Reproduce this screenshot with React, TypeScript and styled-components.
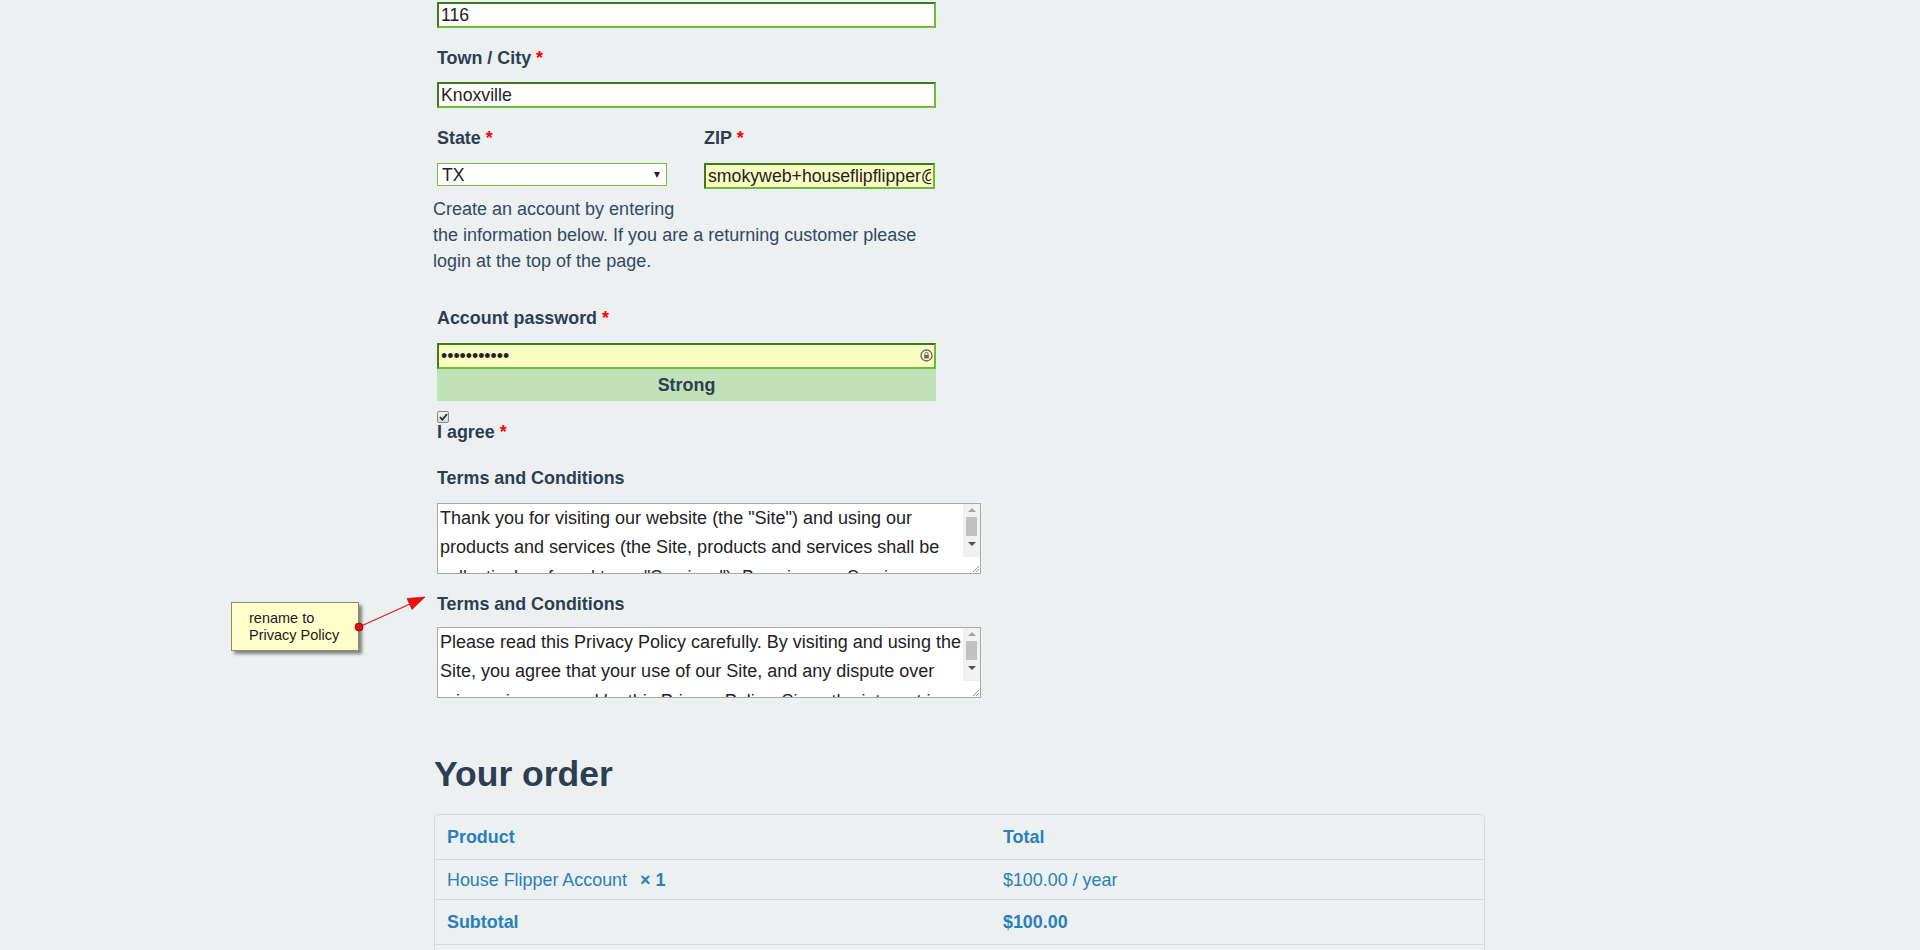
import React from 'react';
import styled, { createGlobalStyle } from 'styled-components';

const GlobalStyle = createGlobalStyle`
    html, body {
        margin: 0;
        padding: 0;
        background: #ecf0f1;
        overflow: hidden;
    }
    body {
        font-family: "Liberation Sans", Arial, sans-serif;
        color: #34495e;
    }
`;

const Page = styled.div`
    position: relative;
    min-height: 950px;
    padding: 2px 0 0 434px;
`;

const FormCol = styled.div`
    width: 502px;
`;

const Field = styled.div<{ $top?: number }>`
    padding-left: 3px;
    margin-top: ${(p) => p.$top ?? 0}px;
`;

const Label = styled.label<{ $lh?: number }>`
    display: block;
    font-size: 17.9px;
    font-weight: bold;
    line-height: ${(p) => p.$lh ?? 26}px;
    color: #2c3e50;
`;

const Req = styled.span`
    color: #f00;
    margin-left: 5px;
`;

const TextInput = styled.input<{ $autofill?: boolean; $w?: number; $top?: number }>`
    display: block;
    box-sizing: border-box;
    width: ${(p) => p.$w ?? 499}px;
    height: 26px;
    margin: ${(p) => p.$top ?? 0}px 0 0;
    padding: 0 2px;
    border: 2px solid;
    border-color: #3e7a1b #6dbb35 #6dbb35 #3e7a1b;
    border-radius: 0;
    outline: none;
    background: ${(p) => (p.$autofill ? '#fafcc2' : '#fff')};
    font-family: "Liberation Sans", Arial, sans-serif;
    font-size: 17.7px;
    color: #222;
`;

const Row = styled.div`
    display: flex;
    gap: 37px;
    margin-top: 17px;
`;

const Col = styled.div<{ $w: number }>`
    width: ${(p) => p.$w}px;
`;

const SelectBox = styled.div`
    box-sizing: border-box;
    display: flex;
    align-items: center;
    justify-content: space-between;
    width: 230px;
    height: 23px;
    margin-top: 12px;
    padding: 1px 6px 0 4px;
    border: 1px solid #79c04a;
    background: #fff;
    font-size: 17.7px;
    color: #222;
`;

const Caret = styled.span`
    width: 0;
    height: 0;
    border-left: 3.5px solid transparent;
    border-right: 3.5px solid transparent;
    border-top: 6px solid #222;
`;

const Paragraph = styled.p`
    margin: 7px 0 0 -1px;
    font-size: 18px;
    line-height: 26px;
    color: #34495e;
`;

const PasswordWrap = styled.div`
    position: relative;
    margin-top: 12px;
    width: 499px;
`;

const KeyIcon = styled.svg`
    position: absolute;
    right: 3px;
    top: 6px;
`;

const Strength = styled.div`
    width: 499px;
    height: 32px;
    background: #c1e1b9;
    font-size: 17.9px;
    font-weight: bold;
    line-height: 32px;
    text-align: center;
    color: #2c3e50;
`;

const CheckBox = styled.span`
    display: flex;
    align-items: center;
    justify-content: center;
    box-sizing: border-box;
    width: 12px;
    height: 12px;
    margin-top: 10px;
    border: 1px solid #8a8a8a;
    border-radius: 2px;
    background: linear-gradient(#f4f4f4, #d8d8d8);
`;

const FakeTextarea = styled.div<{ $top: number }>`
    position: relative;
    box-sizing: border-box;
    width: 544px;
    height: 71px;
    margin-top: ${(p) => p.$top}px;
    border: 1px solid #a9a9a9;
    background: #fff;
    overflow: hidden;
    display: flex;
`;

const AreaText = styled.div`
    flex: 1;
    padding: 0 2px;
    font-size: 18px;
    line-height: 29.4px;
    color: #222;
    overflow: hidden;
`;

const AreaLine = styled.div`
    white-space: nowrap;
`;

const ScrollCol = styled.div`
    width: 17px;
    display: flex;
    flex-direction: column;
    background: #f1f1f1;
`;

const ScrollTrack = styled.div`
    flex: 1;
    display: flex;
    flex-direction: column;
    align-items: center;
    padding-top: 4px;
`;

const ArrowUp = styled.span`
    width: 0;
    height: 0;
    border-left: 4px solid transparent;
    border-right: 4px solid transparent;
    border-bottom: 4px solid #a3a3a3;
`;

const ArrowDown = styled.span`
    width: 0;
    height: 0;
    margin-top: 6px;
    border-left: 4px solid transparent;
    border-right: 4px solid transparent;
    border-top: 4px solid #505050;
`;

const Thumb = styled.span`
    width: 11px;
    height: 19px;
    margin-top: 5px;
    background: #c1c1c1;
`;

const Resizer = styled.div`
    height: 16px;
    background: #fff;
    display: flex;
    align-items: flex-end;
    justify-content: flex-end;
`;

const Heading = styled.h2`
    margin: 56px 0 0 0;
    font-size: 35.5px;
    line-height: 40px;
    font-weight: bold;
    color: #2c3e50;
`;

const OrderTable = styled.table`
    margin-top: 20px;
    width: 1051px;
    border-collapse: separate;
    border-spacing: 0;
    border: 1px solid #d4d9db;
    border-radius: 5px;
    font-size: 17.9px;
    line-height: 26px;
    color: #2980b9;
`;

const Cell = styled.td<{ $bold?: boolean; $pad?: number; $w?: string }>`
    padding: ${(p) => p.$pad ?? 9}px 12px;
    text-align: left;
    vertical-align: middle;
    font-weight: ${(p) => (p.$bold ? 'bold' : 'normal')};
    border-top: 1px solid #d4d9db;
    width: ${(p) => p.$w ?? 'auto'};
    tr:first-child > & {
        border-top: none;
    }
`;

const Qty = styled.strong`
    margin-left: 8px;
`;

const Note = styled.div`
    position: absolute;
    left: 231px;
    top: 602px;
    box-sizing: border-box;
    width: 128px;
    height: 49px;
    padding: 0 0 0 17px;
    border: 1px solid #8c8c6c;
    background: #ffffcc;
    box-shadow: 3px 3px 3px rgba(0, 0, 0, 0.45);
    font-size: 14.5px;
    line-height: 17px;
    color: #1a1a1a;
    display: flex;
    flex-direction: column;
    justify-content: center;
`;

const NoteArrow = styled.svg`
    position: absolute;
    left: 350px;
    top: 588px;
    overflow: visible;
`;

function TextArea({ top, lines }: { top: number; lines: string[] }) {
    return (
        <FakeTextarea $top={top}>
            <AreaText>
                {lines.map((l) => (
                    <AreaLine key={l}>{l}</AreaLine>
                ))}
            </AreaText>
            <ScrollCol>
                <ScrollTrack>
                    <ArrowUp />
                    <Thumb />
                    <ArrowDown />
                </ScrollTrack>
                <Resizer>
                    <svg width="10" height="10" viewBox="0 0 10 10">
                        <path d="M9 3 L3 9 M9 6 L6 9" stroke="#999" strokeWidth="1" />
                    </svg>
                </Resizer>
            </ScrollCol>
        </FakeTextarea>
    );
}

export default function App() {
    return (
        <>
            <GlobalStyle />
            <Page>
                <FormCol>
                    <Field>
                        <TextInput readOnly defaultValue="116" />
                    </Field>
                    <Field $top={17}>
                        <Label>
                            Town / City<Req>*</Req>
                        </Label>
                        <TextInput readOnly defaultValue="Knoxville" $top={11} />
                    </Field>
                    <Row>
                        <Col $w={233}>
                            <Field>
                                <Label>
                                    State<Req>*</Req>
                                </Label>
                                <SelectBox>
                                    <span>TX</span>
                                    <Caret />
                                </SelectBox>
                            </Field>
                        </Col>
                        <Col $w={231}>
                            <Label>
                                ZIP<Req>*</Req>
                            </Label>
                            <TextInput
                                readOnly
                                defaultValue="smokyweb+houseflipflipper@gmail.com"
                                $autofill
                                $w={231}
                                $top={12}
                            />
                        </Col>
                    </Row>
                    <Paragraph>
                        Create an account by entering
                        <br />
                        the information below. If you are a returning customer please login at the
                        top of the page.
                    </Paragraph>
                    <Field $top={31}>
                        <Label>
                            Account password<Req>*</Req>
                        </Label>
                        <PasswordWrap>
                            <TextInput readOnly type="password" defaultValue="abcdefghijk" $autofill />
                            <KeyIcon width="13" height="13" viewBox="0 0 13 13">
                                <circle cx="6.5" cy="6.5" r="5.5" fill="none" stroke="#666" strokeWidth="1.3" />
                                <rect x="4.2" y="6" width="4.6" height="3.4" fill="#666" />
                                <path d="M5 6 V4.8 a1.5 1.5 0 0 1 3 0 V6" fill="none" stroke="#666" strokeWidth="1" />
                            </KeyIcon>
                        </PasswordWrap>
                        <Strength>Strong</Strength>
                        <CheckBox>
                            <svg width="9" height="8" viewBox="0 0 9 8">
                                <path d="M1 4.2 L3.4 6.6 L8 1.2" fill="none" stroke="#333" strokeWidth="1.8" />
                            </svg>
                        </CheckBox>
                        <Label $lh={18}>
                            I agree<Req>*</Req>
                        </Label>
                    </Field>
                    <Field $top={24}>
                        <Label>Terms and Conditions</Label>
                        <TextArea
                            top={12}
                            lines={[
                                'Thank you for visiting our website (the "Site") and using our',
                                'products and services (the Site, products and services shall be',
                                'collectively referred to as "Services"). By using our Services, you',
                            ]}
                        />
                    </Field>
                    <Field $top={17}>
                        <Label>Terms and Conditions</Label>
                        <TextArea
                            top={10}
                            lines={[
                                'Please read this Privacy Policy carefully. By visiting and using the',
                                'Site, you agree that your use of our Site, and any dispute over',
                                'privacy, is governed by this Privacy Policy. Since the internet is',
                            ]}
                        />
                    </Field>
                </FormCol>
                <Heading>Your order</Heading>
                <OrderTable>
                    <tbody>
                        <tr>
                            <Cell as="th" $bold $w="53%">
                                Product
                            </Cell>
                            <Cell as="th" $bold>
                                Total
                            </Cell>
                        </tr>
                        <tr>
                            <Cell $pad={6.5}>
                                House Flipper Account <Qty>× 1</Qty>
                            </Cell>
                            <Cell $pad={6.5}>$100.00 / year</Cell>
                        </tr>
                        <tr>
                            <Cell as="th" $bold>
                                Subtotal
                            </Cell>
                            <Cell $bold>$100.00</Cell>
                        </tr>
                        <tr>
                            <Cell as="th" $bold>
                                Total
                            </Cell>
                            <Cell $bold>$100.00 / year</Cell>
                        </tr>
                    </tbody>
                </OrderTable>

                <Note>
                    <span>rename to</span>
                    <span>Privacy Policy</span>
                </Note>
                <NoteArrow width="80" height="46" viewBox="0 0 80 46">
                    <line x1="9" y1="39" x2="60" y2="16" stroke="#e02020" strokeWidth="1.3" />
                    <polygon points="75,9 62,21.5 57,10.5" fill="#ee1111" stroke="#b00" strokeWidth="0.6" />
                    <circle cx="9" cy="39" r="4" fill="#e01010" stroke="#900" strokeWidth="0.8" />
                </NoteArrow>
            </Page>
        </>
    );
}
